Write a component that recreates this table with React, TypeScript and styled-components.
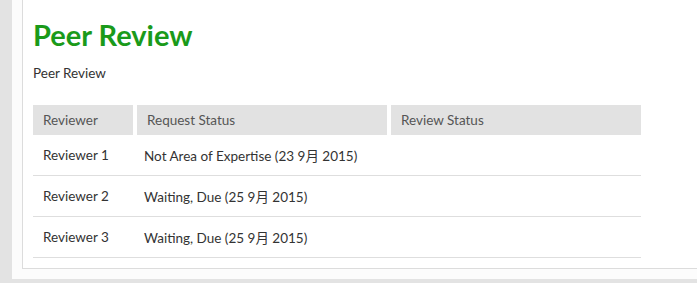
import styled, { createGlobalStyle } from 'styled-components';

const GlobalStyle = createGlobalStyle`
  html, body {
    margin: 0;
    padding: 0;
    overflow: hidden;
    background: #e3e3e3;
  }

  body {
    font-family: Lato, "Noto Sans CJK SC", sans-serif;
  }
`;

const Page = styled.div`
  padding: 0 0 4px 12px;
  overflow: hidden;
`;

const Panel = styled.div`
  width: 720px;
  padding: 0 0 10px 10px;
  background: #fcfcfc;
`;

const Content = styled.div`
  padding: 0 0 10px 10px;
  border-left: 1px solid #dcdcdc;
  border-bottom: 1px solid #dcdcdc;
  background: #ffffff;
`;

const Title = styled.h1`
  margin: 0;
  padding-top: 16px;
  font-size: 29px;
  font-weight: 700;
  line-height: 38px;
  color: #1a9a1a;
`;

const Subtitle = styled.p`
  margin: 10px 0 23px;
  font-size: 13.5px;
  line-height: 18px;
  color: #333333;
`;

const Table = styled.div`
  width: 608px;
`;

const HeaderRow = styled.div`
  display: grid;
  grid-template-columns: 100px 250px 250px;
  gap: 4px;
`;

const HeaderCell = styled.div`
  height: 30px;
  padding: 0 10px;
  display: flex;
  align-items: center;
  font-size: 13.5px;
  color: #555555;
  background: #e2e2e2;
`;

const Row = styled.div`
  display: grid;
  grid-template-columns: 101px 1fr;
  height: 40px;
  border-bottom: 1px solid #dedede;
`;

const Cell = styled.div`
  padding: 0 10px;
  display: flex;
  align-items: center;
  font-size: 13.5px;
  color: #333333;
`;

const reviewers = [
  { name: 'Reviewer 1', request: 'Not Area of Expertise (23 9月 2015)' },
  { name: 'Reviewer 2', request: 'Waiting, Due (25 9月 2015)' },
  { name: 'Reviewer 3', request: 'Waiting, Due (25 9月 2015)' },
];

export default function App() {
  return (
    <>
      <GlobalStyle />
      <Page>
        <Panel>
          <Content>
            <Title>Peer Review</Title>
            <Subtitle>Peer Review</Subtitle>
            <Table>
              <HeaderRow>
                <HeaderCell>Reviewer</HeaderCell>
                <HeaderCell>Request Status</HeaderCell>
                <HeaderCell>Review Status</HeaderCell>
              </HeaderRow>
              {reviewers.map((reviewer) => (
                <Row key={reviewer.name}>
                  <Cell>{reviewer.name}</Cell>
                  <Cell>{reviewer.request}</Cell>
                </Row>
              ))}
            </Table>
          </Content>
        </Panel>
      </Page>
    </>
  );
}
